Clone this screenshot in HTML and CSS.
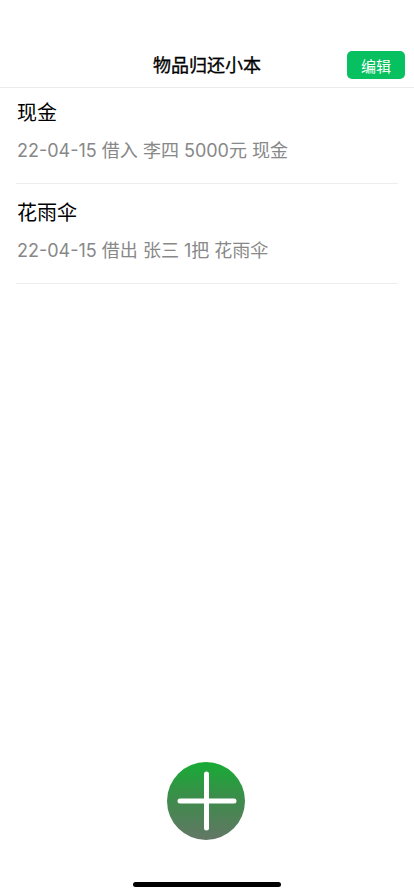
FILE: index.html
```html
<!DOCTYPE html>
<html lang="zh">
<head>
<meta charset="utf-8">
<meta name="viewport" content="width=device-width, initial-scale=1">
<title>物品归还小本</title>
<link rel="stylesheet" href="styles.css">
</head>
<body>
<div class="status-bar"></div>
<header class="nav">
  <h1 class="nav-title">物品归还小本</h1>
  <button class="edit-btn">编辑</button>
</header>
<ul class="list">
  <li class="item">
    <div class="item-title">现金</div>
    <div class="item-desc">22-04-15 借入 李四 5000元 现金</div>
  </li>
  <li class="item">
    <div class="item-title">花雨伞</div>
    <div class="item-desc">22-04-15 借出 张三 1把 花雨伞</div>
  </li>
</ul>
<button class="fab" aria-label="添加">
  <svg width="78" height="78" viewBox="0 0 78 78">
    <path d="M13 39H67M39.5 12V66" stroke="#fff" stroke-width="5" stroke-linecap="round" fill="none"/>
  </svg>
</button>
<div class="home-indicator"></div>
</body>
</html>
```
FILE: styles.css
```css
html, body {
  margin: 0;
  padding: 0;
  background: #fff;
  font-family: "Inter", "Noto Sans CJK SC", sans-serif;
  color: #000;
}
.status-bar {
  height: 44px;
}
.nav {
  position: relative;
  height: 43px;
  border-bottom: 1px solid #ececec;
  display: flex;
  align-items: center;
  justify-content: center;
}
.nav-title {
  margin: 0;
  font-size: 18px;
  font-weight: 400;
  line-height: 24px;
  -webkit-text-stroke: 0.35px #000;
}
.edit-btn {
  position: absolute;
  right: 9px;
  top: 7px;
  width: 58px;
  height: 28px;
  border: none;
  border-radius: 5px;
  background: #07c160;
  color: #fff;
  font-family: inherit;
  font-size: 15px;
  padding: 0;
}
.list {
  list-style: none;
  margin: 0;
  padding: 0 16px;
}
.item {
  padding: 15px 0 19px;
  border-bottom: 1px solid #ededed;
}
.item:first-child {
  padding-top: 11px;
}
.item-title {
  font-size: 20px;
  line-height: 28px;
  padding-left: 1px;
}
.item-desc {
  margin-top: 11px;
  font-size: 18px;
  line-height: 26px;
  color: #888;
  padding-left: 1px;
}
.fab {
  position: fixed;
  left: 167px;
  top: 762px;
  width: 78px;
  height: 78px;
  border: none;
  padding: 0;
  border-radius: 50%;
  background: linear-gradient(180deg, #17ab35 0%, #3f8a4c 50%, #637766 100%);
}
.fab svg {
  display: block;
}
.home-indicator {
  position: fixed;
  left: 133px;
  top: 882px;
  width: 148px;
  height: 5px;
  border-radius: 3px;
  background: #000;
}
```
